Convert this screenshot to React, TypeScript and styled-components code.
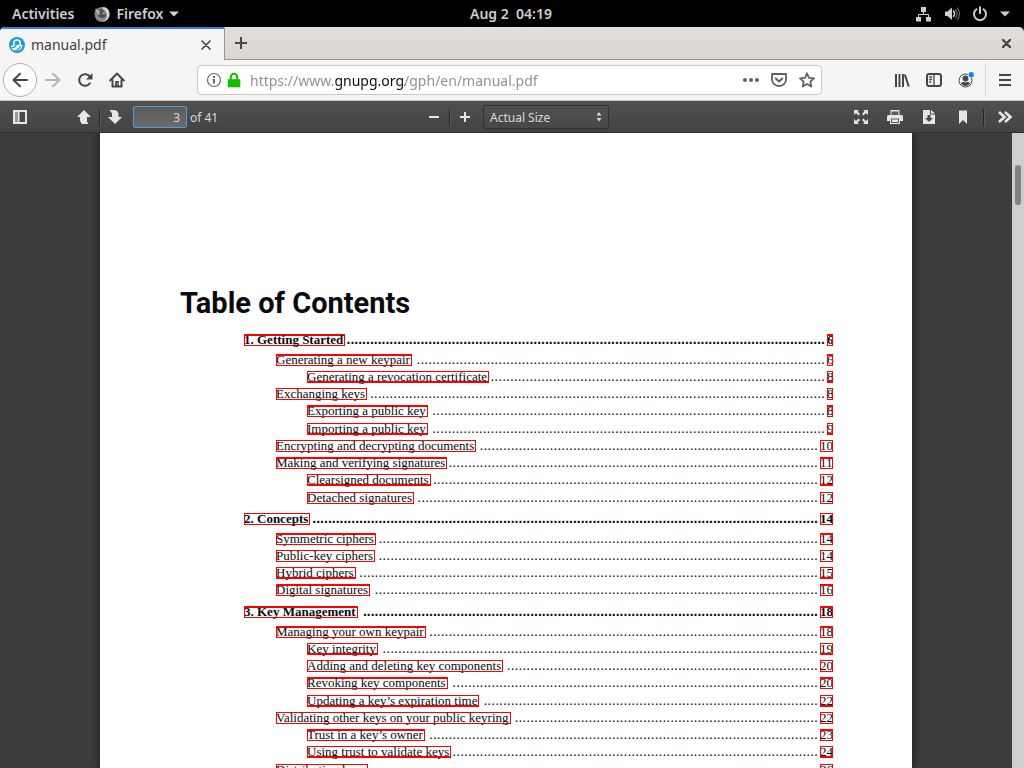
import React, { useEffect, useRef, useState } from 'react';
import styled, { createGlobalStyle } from 'styled-components';

const GlobalStyle = createGlobalStyle`
  * { box-sizing: border-box; }
  html, body { margin: 0; padding: 0; background: #000; }
  body { font-family: "Noto Sans", "Open Sans", sans-serif; font-size: 14px; overflow: hidden; }
  button, input, select { font: inherit; color: inherit; margin: 0; padding: 0; border: 0; background: none; }
`;

const Screen = styled.div`
  display: flex;
  flex-direction: column;
  height: 100vh;
`;

/* ---------- desktop bar ---------- */

const TopBar = styled.header`
  display: grid;
  grid-template-columns: 1fr auto 1fr;
  align-items: center;
  height: 27px;
  flex: none;
  padding: 0 14px 0 12px;
  background: #000;
  color: #cfcfcd;
  font-weight: 600;
`;

const TopGroup = styled.div<{ $end?: boolean }>`
  display: flex;
  align-items: center;
  justify-content: ${(p) => (p.$end ? 'flex-end' : 'flex-start')};
  gap: ${(p) => (p.$end ? '12px' : '20px')};
`;

const TopButton = styled.button`
  display: flex;
  align-items: center;
  gap: 6px;
  height: 27px;
  white-space: pre;
`;

/* ---------- browser chrome ---------- */

const TabStrip = styled.div`
  display: flex;
  flex: none;
  height: 33px;
  background: linear-gradient(#e1dedb, #dad6d2);
  border-radius: 5px 5px 0 0;
  overflow: hidden;
`;

const Tab = styled.div`
  display: flex;
  align-items: center;
  width: 224px;
  padding: 0 9px;
  gap: 6px;
  background: #f6f5f4;
  border-top: 2px solid #3584e4;
  color: #3c4144;
`;

const TabTitle = styled.span`
  flex: 1;
  line-height: 20px;
`;

const StripRest = styled.div`
  display: flex;
  flex: 1;
  justify-content: space-between;
  border-left: 1px solid #9a9996;
  border-bottom: 1px solid #9a9996;
`;

const IconButton = styled.button<{ $w?: number; $dim?: boolean }>`
  display: flex;
  align-items: center;
  justify-content: center;
  width: ${(p) => p.$w ?? 32}px;
  height: 32px;
  flex: none;
  color: ${(p) => (p.$dim ? '#b4b4b2' : '#43484a')};
`;

const TabClose = styled(IconButton)`
  width: 18px;
  height: 18px;
`;

const NavBar = styled.nav`
  display: flex;
  align-items: center;
  flex: none;
  height: 41px;
  padding: 0 3px;
  background: #f6f5f4;
  border-bottom: 1px solid #cdc7c2;
`;

const BackButton = styled(IconButton)`
  width: 34px;
  height: 34px;
  border: 1px solid #b3b0ad;
  border-radius: 50%;
  background: #fdfdfd;
`;

const UrlBar = styled.div`
  display: flex;
  align-items: center;
  flex: 1;
  height: 30px;
  margin: 0 64px;
  padding: 0 0 0 6px;
  border: 1px solid #cdc7c2;
  border-radius: 4px;
  background: #fff;
  color: #5c6163;
`;

const UrlInput = styled.input`
  flex: 1;
  min-width: 0;
  height: 28px;
  margin-left: 6px;
  outline: 0;
  color: transparent;
  background: linear-gradient(90deg, #8b8c8c 85px, #0c0c0d 85px, #0c0c0d 155px, #8b8c8c 155px);
  background-clip: text;
  -webkit-background-clip: text;
`;

const UrlButton = styled(IconButton)`
  width: 28px;
  height: 28px;
  color: #5c6163;
`;

const LeadButton = styled(IconButton)`
  width: 20px;
  height: 28px;
  color: #6a6a6a;
`;

const Divider = styled.div`
  width: 1px;
  height: 34px;
  margin: 0 3px;
  background: #d8d6d3;
`;

/* ---------- PDF viewer ---------- */

const PdfBar = styled.div`
  display: grid;
  grid-template-columns: 1fr auto 1fr;
  flex: none;
  height: 32px;
  padding-left: 5px;
  background: linear-gradient(#505050, #434343);
  border-bottom: 1px solid #303030;
  color: #d9d9d9;
  font-size: 12px;
`;

const PdfGroup = styled.div<{ $end?: boolean }>`
  display: flex;
  align-items: center;
  justify-content: ${(p) => (p.$end ? 'flex-end' : 'flex-start')};
`;

const PdfButton = styled(IconButton)`
  color: #e6e6e6;
`;

const Spacer = styled.div`
  width: 34px;
`;

const PdfSeparator = styled.div<{ $space?: number }>`
  width: 1px;
  height: 17px;
  margin: 0 ${(p) => p.$space ?? 0}px;
  background: #262626;
  box-shadow: 1px 0 0 #5a5a5a;
`;

const PageInput = styled.input`
  width: 54px;
  height: 22px;
  margin: 0 3px;
  padding-right: 6px;
  border: 1px solid #4a9fe0;
  border-radius: 2px;
  background: linear-gradient(#5c5c5c, #6a6a6a);
  text-align: right;
  outline: 0;
`;

const ScaleBox = styled.div`
  display: grid;
  align-items: center;
  width: 126px;
  height: 24px;
  margin-left: 4px;
  border: 1px solid #333;
  border-radius: 2px;
  background: linear-gradient(#515151, #474747);

  > * { grid-area: 1 / 1; }
  > svg { justify-self: end; margin-right: 6px; pointer-events: none; }
`;

const ScaleSelect = styled.select`
  appearance: none;
  width: 100%;
  height: 22px;
  padding-left: 6px;
  outline: 0;
`;

const Viewer = styled.main`
  display: flex;
  flex: 1;
  min-height: 0;
`;

const Canvas = styled.div`
  display: flex;
  flex: 1;
  justify-content: center;
  overflow: hidden;
  background: #3d3d3d;
`;

const Page = styled.article`
  width: 812px;
  padding: 148px 79px 0 80px;
  background: #fff;
  color: #0a0a10;
  box-shadow: 0 0 9px 1px #1c1c1c;
`;

const Scrollbar = styled.div`
  width: 12px;
  padding: 32px 3px;
  background: #cecece;
`;

const Thumb = styled.div`
  width: 6px;
  height: 40px;
  border-radius: 3px;
  background: #7f8383;
`;

const Title = styled.h1`
  margin: 0 0 6px;
  font: bold 29px/44px Roboto, sans-serif;
`;

const Contents = styled.div`
  padding-left: 64px;
  font-family: "Liberation Serif", serif;
  font-size: 13px;
`;

const Section = styled.section`
  margin-bottom: 4px;
`;

const Entries = styled.ol`
  list-style: none;
  margin: 3px 0 0;
  padding: 0;
`;

const Entry = styled.li<{ $level: number }>`
  padding-left: ${(p) => p.$level * 32 - (p.$level > 1 ? 1 : 0)}px;

  &:nth-child(4n) { padding-bottom: 1px; }
`;

const Row = styled.div`
  display: flex;
  align-items: center;
  height: 17px;
`;

const ChapterRow = styled(Row)`
  font-weight: bold;
`;

const Jump = styled.a<{ $heavy?: 'top' | 'bottom' }>`
  flex: none;
  height: 12px;
  padding-right: 2px;
  outline: 1px solid #f00;
  outline-offset: -1px;
  box-shadow: ${(p) => (p.$heavy ? `inset 0 ${p.$heavy === 'top' ? 2 : -2}px 0 #f00` : 'none')};
  line-height: 12px;
  color: inherit;
  text-decoration: none;
  white-space: nowrap;
`;

const PageJump = styled(Jump)<{ $wide: boolean }>`
  width: ${(p) => (p.$wide ? 13 : 6)}px;
  padding: 0;
`;

const LeaderBox = styled.span`
  flex: 1;
  min-width: 0;
  margin: 0 2px 0 1px;
  text-align: right;
  white-space: nowrap;
  font: 14px/17px "Liberation Sans", sans-serif;
  font-weight: inherit;
`;

/* ---------- data ---------- */

type Edge = 'top' | 'bottom' | undefined;
type Item = [level: number, text: string, page: number, edge?: Edge];

const chapters: { head: [string, number, Edge]; items: Item[] }[] = [
  {
    head: ['1. Getting Started', 6, 'top'],
    items: [
      [1, 'Generating a new keypair', 6, 'top'],
      [2, 'Generating a revocation certificate', 8, 'bottom'],
      [1, 'Exchanging keys', 8],
      [2, 'Exporting a public key', 8, 'top'],
      [2, 'Importing a public key', 9, 'bottom'],
      [1, 'Encrypting and decrypting documents', 10],
      [1, 'Making and verifying signatures', 11, 'top'],
      [2, 'Clearsigned documents', 12, 'bottom'],
      [2, 'Detached signatures', 12],
    ],
  },
  {
    head: ['2. Concepts', 14, undefined],
    items: [
      [1, 'Symmetric ciphers', 14, 'top'],
      [1, 'Public-key ciphers', 14],
      [1, 'Hybrid ciphers', 15, 'bottom'],
      [1, 'Digital signatures', 16, 'top'],
    ],
  },
  {
    head: ['3. Key Management', 18, 'top'],
    items: [
      [1, 'Managing your own keypair', 18, 'top'],
      [2, 'Key integrity', 19, 'bottom'],
      [2, 'Adding and deleting key components', 20],
      [2, 'Revoking key components', 20, 'top'],
      [2, 'Updating a key’s expiration time', 22, 'bottom'],
      [1, 'Validating other keys on your public keyring', 22],
      [2, 'Trust in a key’s owner', 23, 'top'],
      [2, 'Using trust to validate keys', 24, 'bottom'],
      [1, 'Distributing keys', 26],
    ],
  },
];

/* Fills the space between an entry and its page number with whole dots. */
function Leader() {
  const box = useRef<HTMLSpanElement>(null);
  const [count, setCount] = useState(0);

  useEffect(() => {
    const el = box.current;
    if (!el) return;
    const dotWidth = 14 * 0.278;
    const fit = () => setCount(Math.max(0, Math.floor(el.clientWidth / dotWidth)));
    fit();
    const observer = new ResizeObserver(fit);
    observer.observe(el);
    return () => observer.disconnect();
  }, []);

  return <LeaderBox ref={box} aria-hidden>{'.'.repeat(count)}</LeaderBox>;
}

function Line({ text, page, edge }: { text: string; page: number; edge?: Edge }) {
  return (
    <>
      <Jump href="#" $heavy={edge}>{text}</Jump>
      <Leader />
      <PageJump href="#" $heavy={edge} $wide={page > 9}>{page}</PageJump>
    </>
  );
}

/* ---------- icons ---------- */

const Svg = ({ w = 16, h = 16, children }: { w?: number; h?: number; children: React.ReactNode }) => (
  <svg width={w} height={h} viewBox={`0 0 ${w} ${h}`} fill="currentColor" aria-hidden>
    {children}
  </svg>
);
const stroke = { fill: 'none', stroke: 'currentColor', strokeWidth: 2, strokeLinecap: 'round', strokeLinejoin: 'round' } as const;

const Caret = () => <Svg w={10} h={6}><path d="M0 .5h10L5 5.5z" /></Svg>;
const FirefoxIcon = () => (
  <Svg>
    <circle cx="8" cy="8.500" r="7.500" fill="#8c8c8c" />
    <path d="M9 1c4 0 6.500 3 6.500 7.200 0 3.800-2.800 6.800-6.500 7.300 3-1.500 4.500-4 4-7C12.600 5.500 11 4 9 3z" fill="#d8d8d8" />
    <path d="M5 3.500C6 2.500 8 3 8.500 4l2 1-2 1.500L7.500 8l2.500.5c1 0 1.500-.5 2-1 .3 3-1.500 4.500-4 4.500-2.800 0-4.500-2-4.500-4.200z" fill="#4c4c4c" />
    <path d="M1.200 4.500L2 2l1.500 2.500 3 .2L5 7l1.500 1.500L4.500 9z" fill="#b2b2b2" />
  </Svg>
);
const NetworkIcon = () => (
  <Svg>
    <path d="M5 1h5v5H5zM0 11h5v4.500H0zM10 11h5v4.500h-5z" />
    <path d="M7.500 6v2.500M2.500 11V8.500h10V11" fill="none" stroke="currentColor" />
  </Svg>
);
const VolumeIcon = () => (
  <Svg>
    <path d="M1 5.500h2.500L8 1.500v12.500l-4.500-4H1z" />
    <path d="M9.500 5q2 2.700 0 5.500" {...stroke} strokeWidth="1.500" />
    <path d="M11.500 3.500q3 4.200 0 8.500M13.500 2q4 5.700 0 11.500" {...stroke} strokeWidth="1.300" opacity=".45" />
  </Svg>
);
const PowerIcon = () => (
  <Svg>
    <path d="M4.500 3.300a6 6 0 1 0 7 0M8 1.200v6" {...stroke} />
  </Svg>
);
const GnupgIcon = () => (
  <Svg>
    <circle cx="8" cy="8" r="8" fill="#1e9ad6" />
    <path d="M4.800 8.500V6.200a3.200 3.200 0 0 1 6.400 0v2.300" fill="none" stroke="#fff" strokeWidth="1.600" />
    <path d="M2 8.500c3 .5 4-.8 6-.8s3 .3 5.500.3c0 3-1.500 5-5 6-2.500.5-5-.5-6.500-3z" fill="#fff" />
    <path d="M1.500 11c3 0 5-1 6-3.200M5 14.200c3.500-.7 5.500-2.200 6.500-5" fill="none" stroke="#1e9ad6" strokeWidth="1.300" />
  </Svg>
);
const CloseIcon = ({ s = 10, bold = false }: { s?: number; bold?: boolean }) => (
  <Svg w={s} h={s}><path d={`M1 1l${s - 2} ${s - 2}M${s - 1} 1L1 ${s - 1}`} {...stroke} strokeWidth={bold ? 2.4 : 1.7} /></Svg>
);
const PlusIcon = ({ s = 14 }: { s?: number }) => (
  <Svg w={s} h={s}><path d={`M${s / 2} 1v${s - 2}M1 ${s / 2}h${s - 2}`} {...stroke} strokeLinecap="butt" /></Svg>
);
const BackIcon = () => <Svg><path d="M15 8H1.500M8 1.800L1.500 8 8 14.200" {...stroke} /></Svg>;
const ForwardIcon = () => <Svg><path d="M1 8h13.500M8 1.800L14.500 8 8 14.200" {...stroke} /></Svg>;
const ReloadIcon = () => (
  <Svg>
    <path d="M12.800 11.200A5.800 5.800 0 1 1 13 5" {...stroke} />
    <path d="M15.500 1v6.500H9z" />
  </Svg>
);
const HomeIcon = () => (
  <Svg>
    <path d="M1.200 8.500L8 1.500l6.800 7" {...stroke} />
    <path d="M3.500 8v6.500h9V8" {...stroke} />
    <path d="M6.200 9h3.600v5.500H6.200z" /><path d="M8.300 11h.8v1.200h-.8z" fill="#fff" />
  </Svg>
);
const InfoIcon = () => (
  <Svg>
    <circle cx="8" cy="8" r="6.500" {...stroke} strokeWidth="1.200" />
    <path d="M7 4h2v2H7zM6.500 7H9v4.500H7V8h-.5z" />
  </Svg>
);
const LockIcon = () => (
  <Svg>
    <path d="M2 7.500h12V15H2z" fill="#12bc00" stroke="#12bc00" strokeLinejoin="round" strokeWidth=".6" />
    <path d="M4.800 8V5a3.200 3.200 0 0 1 6.400 0v3" fill="none" stroke="#12bc00" strokeWidth="2" />
  </Svg>
);
const DotsIcon = () => <Svg><circle cx="2" cy="8" r="2" /><circle cx="8" cy="8" r="2" /><circle cx="14" cy="8" r="2" /></Svg>;
const PocketIcon = () => (
  <Svg>
    <path d="M1 2h14v5.500a7 6.500 0 0 1-14 0z" {...stroke} strokeWidth="1.800" />
    <path d="M4.800 6.500L8 9.500l3.200-3" {...stroke} />
  </Svg>
);
const StarIcon = () => (
  <Svg><path d="M8 1.300l2 4.500 5 .5-3.700 3.300 1 4.900L8 12l-4.300 2.500 1-4.900L1 6.300l5-.5z" {...stroke} strokeWidth="1.800" /></Svg>
);
const LibraryIcon = () => (
  <Svg><path d="M2 2v13M5.500 2v13M9 2v13M10.800 2.500l4 12" {...stroke} strokeLinecap="butt" /></Svg>
);
const SidebarsIcon = () => (
  <Svg>
    <rect x="1" y="2" width="14" height="12" rx="2" {...stroke} />
    <path d="M8 2v12M3.200 5h3M3.200 7.500h3M3.200 10h2" fill="none" stroke="currentColor" strokeWidth="1.300" />
  </Svg>
);
const AccountIcon = () => (
  <Svg>
    <circle cx="7.500" cy="8.500" r="6.500" fill="none" stroke="currentColor" />
    <circle cx="7.500" cy="6.500" r="2.900" />
    <path d="M3 11.500c1-1.800 3-1.500 4.500-1 1.500-.5 3.500-.8 4.500 1-2.300 3.300-6.700 3.300-9 0z" />
    <circle cx="13" cy="2.800" r="3.200" fill="#f6f5f4" /><circle cx="13.200" cy="2.700" r="2.600" fill="#0a84ff" />
  </Svg>
);
const MenuIcon = () => <Svg w={14} h={14}><path d="M1 2h12M1 7h12M1 12h12" {...stroke} strokeLinecap="butt" /></Svg>;
const PanelIcon = () => (
  <Svg>
    <path d="M1 1h14v14H1zM3 3v10h3V3zM7.500 3v10H13V3z" fillRule="evenodd" />
    <path d="M3 3h3v10H3z" opacity=".5" />
  </Svg>
);
const UpIcon = () => <Svg><path d="M8 1l7 7h-4v4.500l1.500 2.500H6q-2-1.500-2-4V8H1z" /></Svg>;
const DownIcon = () => <Svg><path d="M8 15l7-7h-3.500V6q0-5-5-5H2.500L5 4.500V8H1z" /></Svg>;
const MinusIcon = () => <Svg w={12} h={12}><path d="M1 5h10v2H1z" /></Svg>;
const SpinIcon = () => <Svg w={6} h={10}><path d="M3 0l2.500 3.500h-5zM3 9.500L.5 6h5z" /></Svg>;
const FullscreenIcon = () => (
  <Svg>
    <path d="M1 1h5L4.500 2.500 7 5 5.500 6.500 3 4 1 6zM15 1v5l-2-2-2.500 2.500L9 5l2.500-2.500L10 1zM1 15v-5l2 2 2.500-2.500L7 11l-2.500 2.500L6 15zM15 15h-5l1.500-1.500L9 11l1.500-1.500L13 12l2-2z" />
  </Svg>
);
const PrintIcon = () => (
  <Svg>
    <path d="M3.500 1h9v5h-9zM1.500 6h13q1.500 0 1.500 1.500V12h-3v3H3v-3H0V7.500Q0 6 1.500 6z" />
    <path d="M4.500 2.500h7V6h-7z" fill="#474747" opacity=".85" />
    <path d="M4 9.500h8V14H4z" fill="#5a5a5a" /><path d="M5 10.500h6V13H5z" />
  </Svg>
);
const DownloadIcon = () => (
  <Svg><path d="M2 1h7v4.500h5V15H2zM10 1l4 3.500h-4zM6.500 6v3H4L8 13l4-4H9.500V6z" fillRule="evenodd" /></Svg>
);
const BookmarkIcon = () => <Svg><path d="M4 1.500h8V15l-4-4-4 4z" /></Svg>;
const MoreIcon = () => <Svg><path d="M1 3l5.500 5L1 13M7 3l5.500 5L7 13" {...stroke} strokeWidth="2.600" strokeLinecap="butt" strokeLinejoin="miter" /></Svg>;

export default function App() {
  return (
    <Screen>
      <GlobalStyle />
      <TopBar>
        <TopGroup>
          <TopButton>Activities</TopButton>
          <TopButton><FirefoxIcon />Firefox<Caret /></TopButton>
        </TopGroup>
        <TopButton>{'Aug 2  04:19'}</TopButton>
        <TopGroup $end>
          <TopButton aria-label="Network"><NetworkIcon /></TopButton>
          <TopButton aria-label="Volume"><VolumeIcon /></TopButton>
          <TopButton aria-label="Power"><PowerIcon /></TopButton>
          <TopButton aria-label="System menu"><Caret /></TopButton>
        </TopGroup>
      </TopBar>

      <TabStrip>
        <Tab>
          <GnupgIcon />
          <TabTitle>manual.pdf</TabTitle>
          <TabClose aria-label="Close tab"><CloseIcon s={10} /></TabClose>
        </Tab>
        <StripRest>
          <IconButton aria-label="New tab"><PlusIcon /></IconButton>
          <IconButton $w={36} aria-label="Close window"><CloseIcon s={9} bold /></IconButton>
        </StripRest>
      </TabStrip>

      <NavBar>
        <BackButton aria-label="Back"><BackIcon /></BackButton>
        <IconButton $dim aria-label="Forward"><ForwardIcon /></IconButton>
        <IconButton aria-label="Reload"><ReloadIcon /></IconButton>
        <IconButton aria-label="Home"><HomeIcon /></IconButton>
        <UrlBar>
          <LeadButton aria-label="Site information"><InfoIcon /></LeadButton>
          <LeadButton aria-label="Secure connection"><LockIcon /></LeadButton>
          <UrlInput aria-label="Address" defaultValue="https://www.gnupg.org/gph/en/manual.pdf" />
          <UrlButton aria-label="Page actions"><DotsIcon /></UrlButton>
          <UrlButton aria-label="Save to Pocket"><PocketIcon /></UrlButton>
          <UrlButton aria-label="Bookmark this page"><StarIcon /></UrlButton>
        </UrlBar>
        <IconButton aria-label="Library"><LibraryIcon /></IconButton>
        <IconButton aria-label="Sidebars"><SidebarsIcon /></IconButton>
        <IconButton aria-label="Account"><AccountIcon /></IconButton>
        <Divider />
        <IconButton aria-label="Menu"><MenuIcon /></IconButton>
      </NavBar>

      <PdfBar>
        <PdfGroup>
          <PdfButton $w={30} aria-label="Toggle sidebar"><PanelIcon /></PdfButton>
          <Spacer />
          <PdfButton $w={30} aria-label="Previous page"><UpIcon /></PdfButton>
          <PdfSeparator />
          <PdfButton $w={30} aria-label="Next page"><DownIcon /></PdfButton>
          <PageInput id="page" defaultValue="3" />
          <label htmlFor="page">of 41</label>
        </PdfGroup>
        <PdfGroup>
          <PdfButton $w={28} aria-label="Zoom out"><MinusIcon /></PdfButton>
          <PdfSeparator $space={1} />
          <PdfButton $w={28} aria-label="Zoom in"><PlusIcon s={12} /></PdfButton>
          <ScaleBox>
            <ScaleSelect aria-label="Zoom"><option>Actual Size</option></ScaleSelect>
            <SpinIcon />
          </ScaleBox>
        </PdfGroup>
        <PdfGroup $end>
          <PdfButton $w={34} aria-label="Presentation mode"><FullscreenIcon /></PdfButton>
          <PdfButton $w={34} aria-label="Print"><PrintIcon /></PdfButton>
          <PdfButton $w={34} aria-label="Download"><DownloadIcon /></PdfButton>
          <PdfButton $w={34} aria-label="Current view"><BookmarkIcon /></PdfButton>
          <PdfSeparator $space={3} />
          <PdfButton $w={37} aria-label="Tools"><MoreIcon /></PdfButton>
        </PdfGroup>
      </PdfBar>

      <Viewer>
        <Canvas>
          <Page>
            <Title>Table of Contents</Title>
            <Contents>
              {chapters.map(({ head, items }) => (
                <Section key={head[0]}>
                  <ChapterRow><Line text={head[0]} page={head[1]} edge={head[2]} /></ChapterRow>
                  <Entries>
                    {items.map(([level, text, page, edge]) => (
                      <Entry key={text} $level={level}>
                        <Row><Line text={text} page={page} edge={edge} /></Row>
                      </Entry>
                    ))}
                  </Entries>
                </Section>
              ))}
            </Contents>
          </Page>
        </Canvas>
        <Scrollbar><Thumb /></Scrollbar>
      </Viewer>
    </Screen>
  );
}
